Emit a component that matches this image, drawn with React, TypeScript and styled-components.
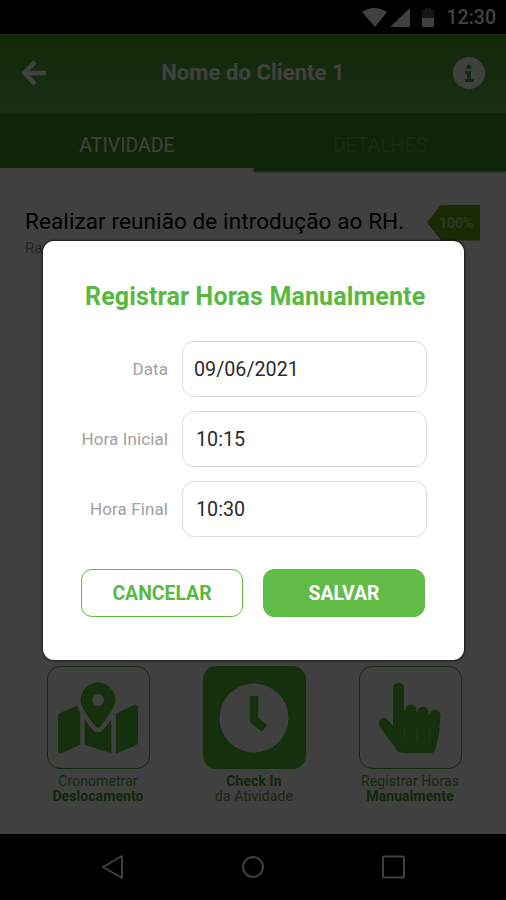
import React from "react";
import styled, { createGlobalStyle } from "styled-components";
import { FaMapMarkedAlt } from "react-icons/fa";

const Global = createGlobalStyle`
  * { box-sizing: border-box; }
  body { margin: 0; background: #000; font-family: Roboto, sans-serif; }
`;

const Phone = styled.div`
  position: relative;
  width: 506px;
  height: 900px;
  overflow: hidden;
  background: #fff;
  display: flex;
  flex-direction: column;
`;

const StatusBar = styled.div`
  height: 34px;
  background: #000;
  color: #fff;
  display: flex;
  align-items: center;
  justify-content: flex-end;
  padding: 1px 10px 0 0;
  font-size: 19.5px;
  font-weight: 500;
  flex: none;
`;

const StatusIcons = styled.svg`
  width: 73px;
  height: 20px;
  margin-right: 12.500px;
`;

const Header = styled.header`
  height: 79px;
  flex: none;
  display: flex;
  align-items: center;
  justify-content: space-between;
  padding: 0 21px 2px;
  background: linear-gradient(#44a020, #6ab850);
  color: #fff;
`;

const HeaderTitle = styled.h1`
  margin: 0 0 0 6px;
  font-size: 22px;
  font-weight: 700;
  letter-spacing: 0.08px;
`;

const Tabs = styled.nav`
  display: grid;
  grid-template-columns: 254px 1fr;
  align-items: start;
  height: 59px;
  flex: none;
`;

const Tab = styled.div<{ $active?: boolean }>`
  height: ${p => (p.$active ? 55 : 58)}px;
  background: #3c9420;
  box-shadow: ${p => (p.$active ? "none" : "0 1px 2px #3c9420")};
  color: ${p => (p.$active ? "#fff" : "#68a850")};
  font-size: 19.5px;
  line-height: 66px;
  text-align: center;
`;

const Content = styled.main`
  flex: 1;
  display: flex;
  flex-direction: column;
`;

const TaskRow = styled.div`
  display: flex;
  justify-content: space-between;
  align-items: center;
  padding: 0 26px 0 25px;
  margin-top: 32px;
  height: 37px;
`;

const TaskName = styled.h2`
  margin: 0;
  padding-bottom: 4px;
  font-size: 22.5px;
  line-height: 34px;
  font-weight: 400;
  color: #000;
  white-space: nowrap;
  letter-spacing: 0.1px;
`;

const Progress = styled.span`
  width: 53px;
  height: 36px;
  line-height: 37px;
  padding-left: 12px;
  background: #5ca810;
  clip-path: polygon(0 50%, 27% 0, 100% 0, 100% 100%, 27% 100%);
  color: #b0d890;
  font-size: 14px;
  font-weight: 700;
`;

const Note = styled.div`
  margin: -2px 0 0 25px;
  height: 18px;
  font-size: 15px;
  line-height: 18px;
  color: #999;
`;

const DetailsCard = styled.div`
  height: 320px;
  margin: 38px 24px 0 22px;
  border-radius: 12px;
  border: 1px solid #f8f8f8;
`;

const Actions = styled.div`
  display: grid;
  grid-template-columns: repeat(3, 156px);
  margin: auto 0 30px 20px;
`;

const Action = styled.div`
  display: flex;
  flex-direction: column;
  align-items: center;
`;

const ActionTile = styled.div<{ $filled?: boolean }>`
  width: 103px;
  height: 103px;
  border-radius: 13px;
  border: 1.5px solid #54a83c;
  background: ${p => (p.$filled ? "#54c030" : "transparent")};
  ${p => p.$filled && "border-color: #54c030;"}
  color: #54c030;
  display: flex;
  align-items: center;
  justify-content: center;
`;

const ActionText = styled.div`
  margin-top: 5px;
  font-size: 14px;
  line-height: 15px;
  color: #68a050;
  text-align: center;
  letter-spacing: 0.08px;
  b { color: #489830; }
`;

const NavBar = styled.div`
  height: 66px;
  flex: none;
  background: #000;
  display: flex;
  justify-content: center;
  align-items: center;
  gap: 112px;
`;

const NavIcon = styled.svg`
  width: 28px;
  height: 28px;
  fill: none;
  stroke: #fff;
  stroke-width: 2;
  stroke-linejoin: round;
`;

const Overlay = styled.div`
  position: absolute;
  inset: 0;
  background: rgba(0, 0, 0, 0.75);
  display: flex;
  justify-content: center;
  align-items: flex-start;
  padding: 241px 0 0 1px;
`;

const Dialog = styled.section`
  width: 421px;
  height: 419px;
  border-radius: 11px;
  background: #fff;
  box-shadow: 0 0 2px 1px rgba(0, 0, 0, 0.6);
  padding: 0 39px 0 38px;
`;

const DialogTitle = styled.h2`
  margin: 40px 0 28px 4px;
  font-size: 25px;
  line-height: 32px;
  font-weight: 700;
  color: #58b940;
  white-space: nowrap;
  letter-spacing: 0.14px;
`;

const Field = styled.label`
  display: grid;
  grid-template-columns: 87px 245px;
  column-gap: 14px;
  margin-bottom: 14px;
  align-items: center;
`;

const FieldLabel = styled.span`
  font-size: 17px;
  color: #a0a0a0;
  text-align: right;
  white-space: nowrap;
  letter-spacing: 0.1px;
`;

const FieldValue = styled.span<{ $inset: number }>`
  height: 56px;
  border: 1px solid #dcdcdc;
  border-radius: 12px;
  display: flex;
  align-items: center;
  padding-left: ${p => p.$inset}px;
  font-size: 19.7px;
  color: #2a2a2a;
`;

const Buttons = styled.div`
  display: flex;
  justify-content: space-between;
  margin-top: 32px;
`;

const Button = styled.button<{ $primary?: boolean }>`
  width: 162px;
  height: 48px;
  border-radius: 11px;
  border: 1px solid #62bb46;
  padding: 0;
  background: ${p => (p.$primary ? "#62bb46" : "#fff")};
  color: ${p => (p.$primary ? "#fff" : "#58b940")};
  font-family: inherit;
  font-size: 19.4px;
  font-weight: 700;
`;

const fields = [
  { label: "Data", value: "09/06/2021", inset: 11 },
  { label: "Hora Inicial", value: "10:15", inset: 13 },
  { label: "Hora Final", value: "10:30", inset: 13 },
];

const ClockIcon = () => (
  <svg width="70" height="70" viewBox="0 0 70 70">
    <circle cx="35" cy="35" r="34.5" fill="#fff" />
    <path d="M35 13V37L45.500 45.500" fill="none" stroke="#54c030" strokeWidth="8.500" />
  </svg>
);

const HandIcon = () => (
  <svg width="64" height="72" viewBox="0 0 64 72" fill="currentColor">
    <path d="M15 44V6a5.500 5.500 0 0 1 11 0v22h1.500a5.500 5.500 0 0 1 11 0v2h1a5.500 5.500 0 0 1 11 0v3h1a5.500 5.500 0 0 1 11 0L61 52q-1 5-2.500 10l-1 5c-1 3-2 4-5 4H26c-4 0-5-1-7-3L2 45c-4-7 3-12 8-7z" />
    <path d="M26.500 46v12M39 46v12M51.500 46v12" stroke="#a0c898" strokeWidth="0.800" />
  </svg>
);

export default function App() {
  return (
    <>
      <Global />
      <Phone>
        <StatusBar>
          <StatusIcons viewBox="0 0 73 20" fill="#fff">
            <path d="M1 4Q13-4 26 4L14 19Z" />
            <path d="M29 19L49 0V19Z" />
            <path d="M61 2h3V0h6v2h3v8H61Z" opacity=".35" />
            <path d="M61 10h12v9H61Z" />
          </StatusIcons>
          12:30
        </StatusBar>
        <Header>
          <svg width="26" height="26" viewBox="0 0 26 26" fill="none" stroke="#fff" strokeWidth="4.500">
            <path d="M14 2L3.500 13L14 24M3.500 13H25" />
          </svg>
          <HeaderTitle>Nome do Cliente 1</HeaderTitle>
          <svg width="32" height="32" viewBox="0 0 32 32">
            <circle cx="16" cy="16" r="16" fill="#fff" />
            <circle cx="16" cy="10" r="2.500" fill="#55a838" />
            <path d="M12 14h6v8h2.500v3H12v-3h2v-5h-2Z" fill="#55a838" />
          </svg>
        </Header>
        <Tabs>
          <Tab $active>ATIVIDADE</Tab>
          <Tab>DETALHES</Tab>
        </Tabs>
        <Content>
          <TaskRow>
            <TaskName>Realizar reunião de introdução ao RH.</TaskName>
            <Progress>100%</Progress>
          </TaskRow>
          <Note>Ra</Note>
          <DetailsCard />
          <Actions>
            <Action>
              <ActionTile><FaMapMarkedAlt size={80} /></ActionTile>
              <ActionText>Cronometrar<br /><b>Deslocamento</b></ActionText>
            </Action>
            <Action>
              <ActionTile $filled><ClockIcon /></ActionTile>
              <ActionText><b>Check In</b><br />da Atividade</ActionText>
            </Action>
            <Action>
              <ActionTile><HandIcon /></ActionTile>
              <ActionText>Registrar Horas<br /><b>Manualmente</b></ActionText>
            </Action>
          </Actions>
        </Content>
        <NavBar>
          <NavIcon viewBox="0 0 28 28"><path d="M23 3V25L4 14Z" /></NavIcon>
          <NavIcon viewBox="0 0 28 28"><circle cx="14" cy="14" r="10" /></NavIcon>
          <NavIcon viewBox="0 0 28 28"><rect x="4" y="3.500" width="21" height="21" rx="1" /></NavIcon>
        </NavBar>
        <Overlay>
          <Dialog role="dialog">
            <DialogTitle>Registrar Horas Manualmente</DialogTitle>
            {fields.map(f => (
              <Field key={f.label}>
                <FieldLabel>{f.label}</FieldLabel>
                <FieldValue $inset={f.inset}>{f.value}</FieldValue>
              </Field>
            ))}
            <Buttons>
              <Button>CANCELAR</Button>
              <Button $primary>SALVAR</Button>
            </Buttons>
          </Dialog>
        </Overlay>
      </Phone>
    </>
  );
}
